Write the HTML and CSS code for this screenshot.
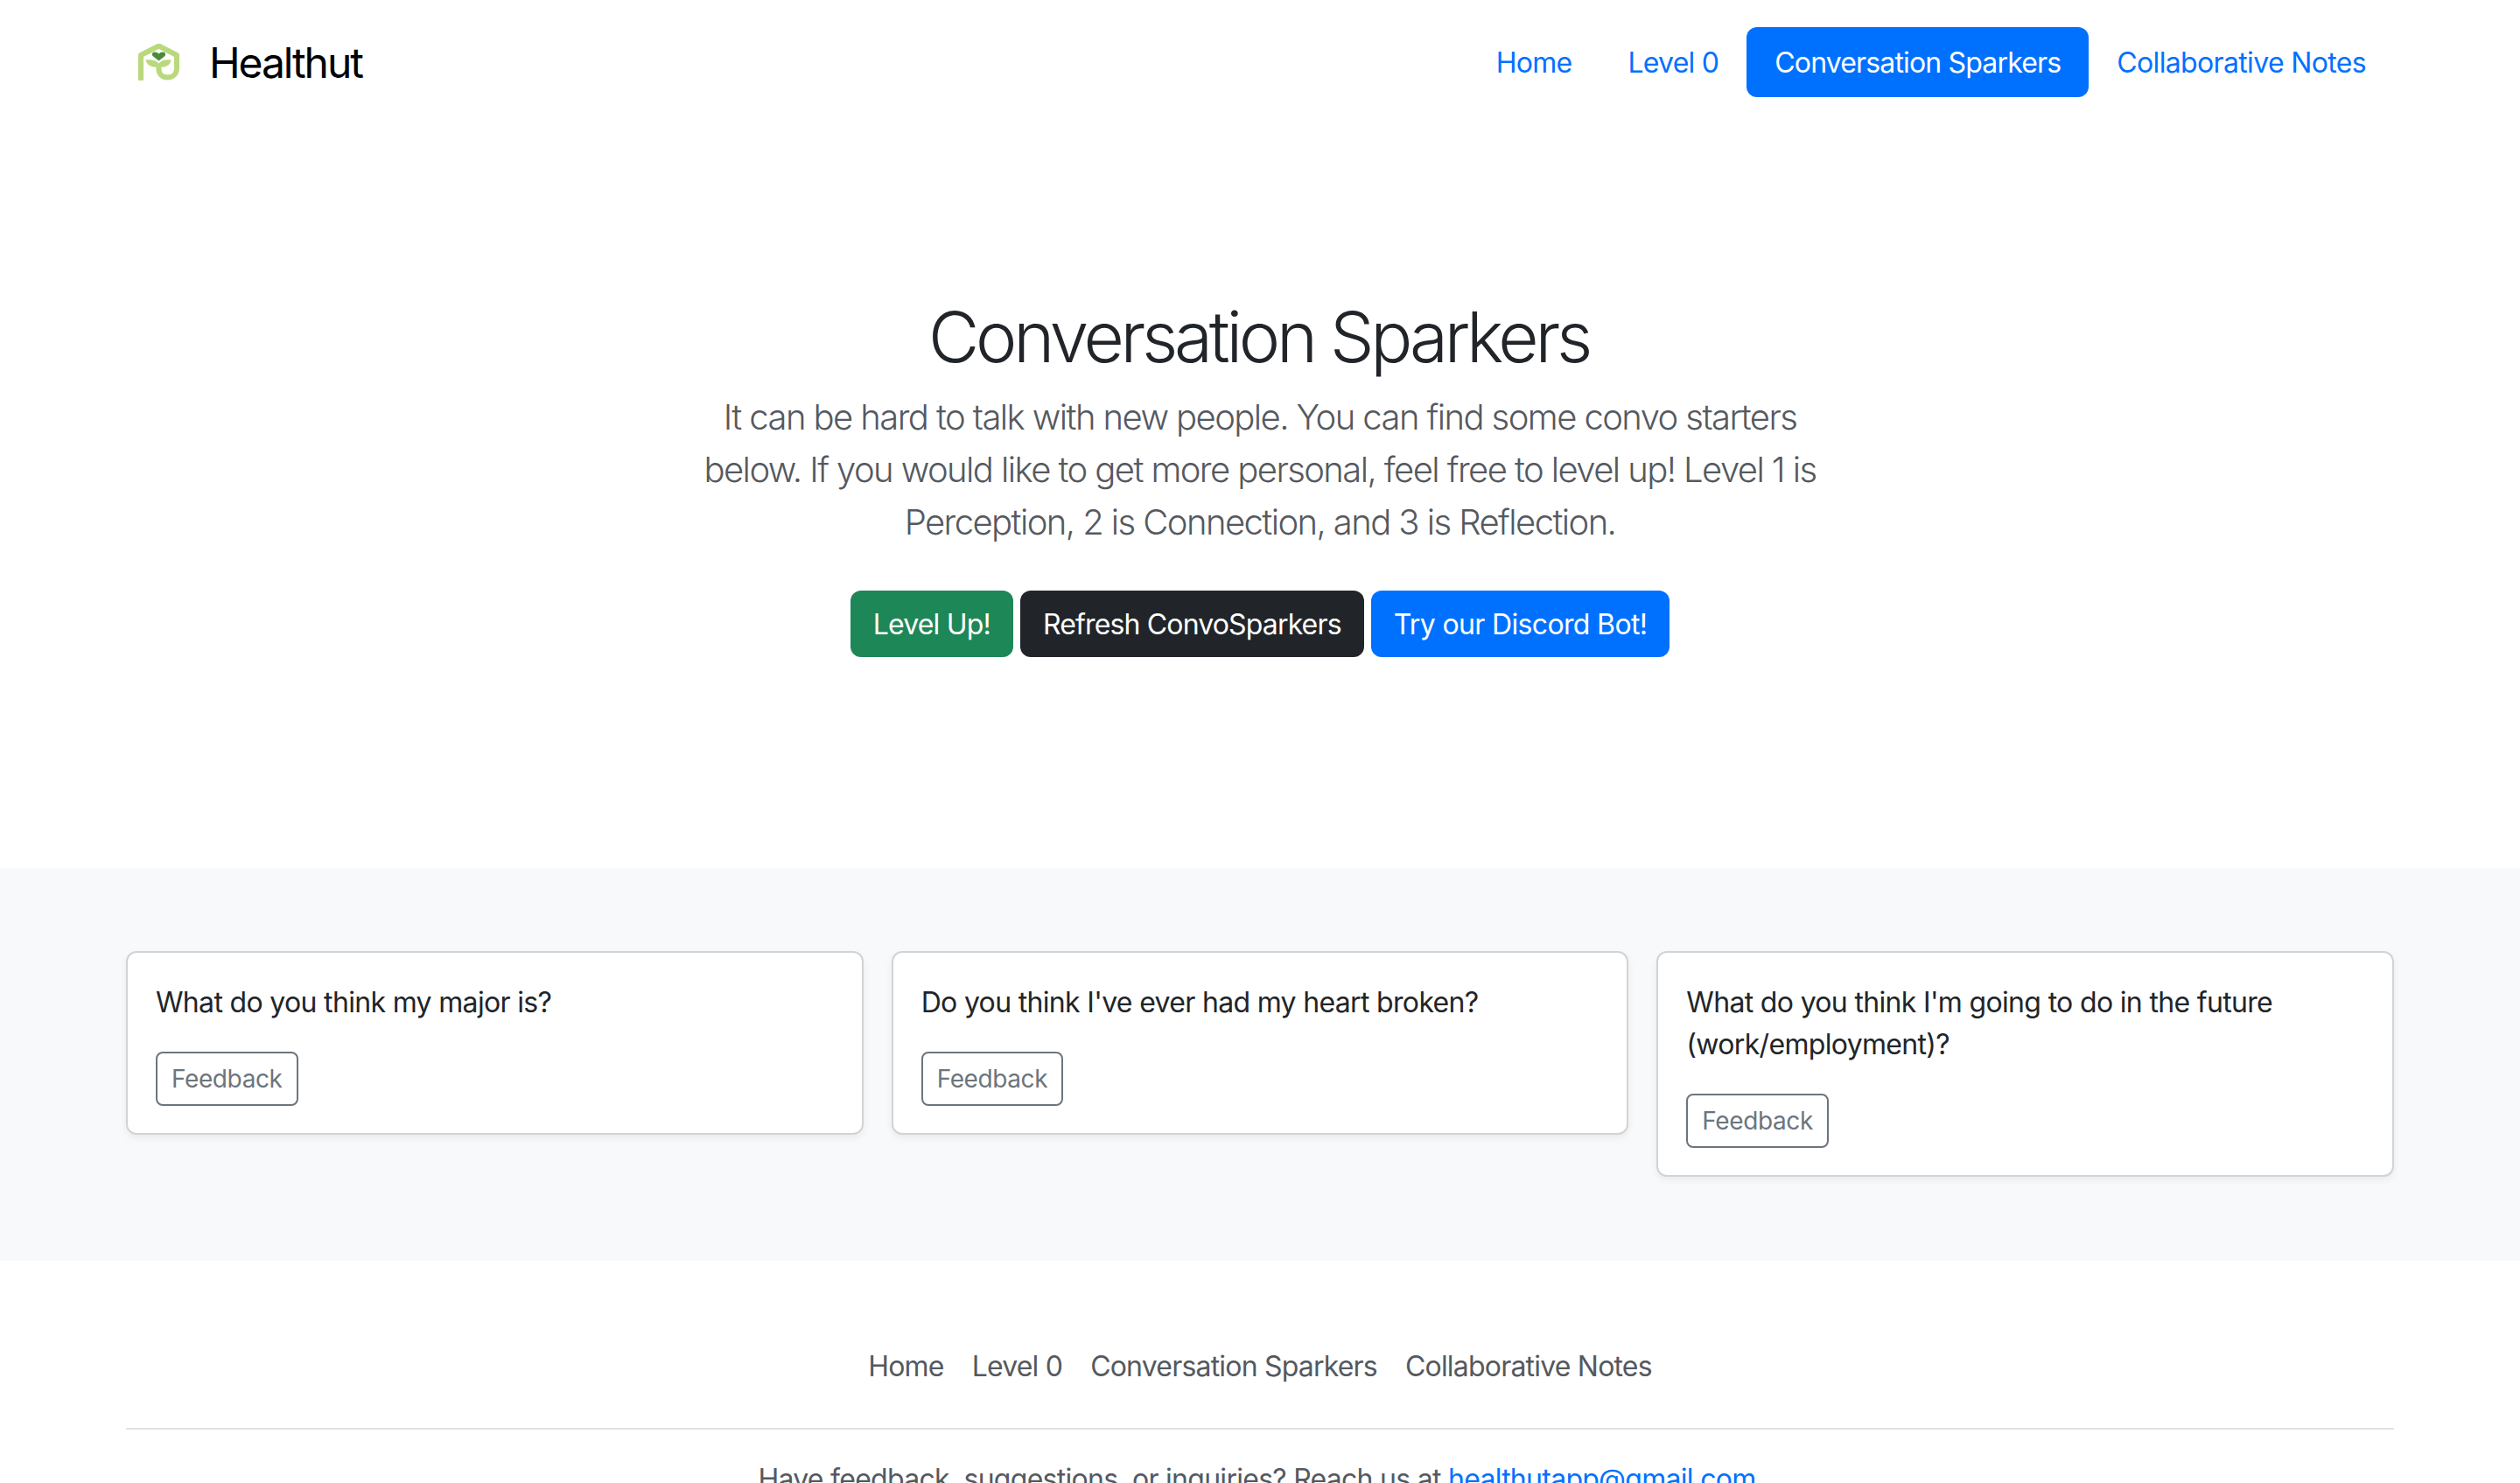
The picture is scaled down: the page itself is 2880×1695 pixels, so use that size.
FILE: index.html
```html
<!DOCTYPE html>
<html lang="en">
<head>
<meta charset="utf-8">
<title>Healthut</title>
<link rel="stylesheet" href="styles.css">
</head>
<body>
<header class="wrap topbar">
  <a class="brand" href="#">
    <svg class="logo" viewBox="0 0 47 42" aria-hidden="true">
      <path class="logo-house" d="M3 42V13L23.500 2.500L44 13V28C44 34.500 39.500 38.500 33.500 38.500C27.500 38.500 23.500 34.500 23.500 29V24" />
      <path class="logo-leaf" d="M8.500 18.500C14 17.500 21 19 23.500 22.500C26 19 32 17.500 37.500 18.500C37 24 32 27.500 25 26.500H22C15 27.500 9.500 24 8.500 18.500Z"/>
      <path class="logo-heart" d="M23.500 19.500L16.500 14C15 11.500 16.500 9.500 19 9.500C21 9.500 22.500 10.300 23.500 11.500C24.500 10.300 26 9.500 28 9.500C30.500 9.500 32 11.500 30.500 14Z"/>
    </svg>
    <span class="brand-name">Healthut</span>
  </a>
  <nav class="nav">
    <a class="nav-link" href="#">Home</a>
    <a class="nav-link" href="#">Level 0</a>
    <a class="nav-link active" href="#">Conversation Sparkers</a>
    <a class="nav-link notes" href="#">Collaborative Notes</a>
  </nav>
</header>

<main>
  <section class="hero">
    <h1>Conversation Sparkers</h1>
    <p class="lead">It can be hard to talk with new people. You can find some convo starters below. If you would like to get more personal, feel free to level up! Level 1 is Perception, 2 is Connection, and 3 is Reflection.</p>
    <div class="actions">
      <a class="btn btn-green" href="#">Level Up!</a>
      <a class="btn btn-dark" href="#">Refresh ConvoSparkers</a>
      <a class="btn btn-blue" href="#">Try our Discord Bot!</a>
    </div>
  </section>

  <section class="album">
    <div class="wrap cards">
      <article class="card">
        <p>What do you think my major is?</p>
        <a class="feedback" href="#">Feedback</a>
      </article>
      <article class="card">
        <p>Do you think I've ever had my heart broken?</p>
        <a class="feedback" href="#">Feedback</a>
      </article>
      <article class="card">
        <p>What do you think I'm going to do in the future (work/employment)?</p>
        <a class="feedback" href="#">Feedback</a>
      </article>
    </div>
  </section>
</main>

<footer class="wrap footer">
  <nav class="footer-nav">
    <a href="#">Home</a>
    <a href="#">Level 0</a>
    <a href="#">Conversation Sparkers</a>
    <a href="#">Collaborative Notes</a>
  </nav>
  <p class="contact">Have feedback, suggestions, or inquiries? Reach us at <a href="#">healthutapp@gmail.com</a></p>
</footer>
</body>
</html>
```

FILE: styles.css
```css
* { box-sizing: border-box; }
html { overflow: hidden; }
body {
  margin: 0;
  background: #fff;
  color: #212529;
  font-family: Inter, "Liberation Sans", sans-serif;
  font-size: 32px;
  line-height: 48px;
  letter-spacing: -0.85px;
}
a { text-decoration: none; }
.wrap { width: 2592px; margin: 0 auto; }

.topbar {
  display: flex;
  align-items: center;
  justify-content: space-between;
  padding: 31px 0 32px;
}
.brand {
  display: flex;
  align-items: center;
  gap: 34px;
  padding-left: 14px;
  color: #000;
  font-size: 48px;
  letter-spacing: -2.1px;
}
.brand-name { padding-top: 2px; }
.logo { width: 47px; height: 42px; }
.logo-house { fill: none; stroke: #b9d97c; stroke-width: 6; stroke-linejoin: round; }
.logo-leaf { fill: #b9d97c; }
.logo-heart { fill: #4b8a36; }

.nav { display: flex; }
.nav-link {
  padding: 17px 32px 15px;
  border-radius: 12px;
  color: #0071ff;
  letter-spacing: -0.75px;
}
.nav-link.active { background: #0071ff; color: #fff; letter-spacing: -0.84px; }
.nav-link.notes { letter-spacing: -0.65px; }

.hero {
  padding: 194px 0 241px;
  text-align: center;
}
.hero h1 {
  margin: 0 0 14px;
  padding-right: 3px;
  font-size: 80px;
  font-weight: 300;
  line-height: 96px;
  letter-spacing: -4.25px;
}
.lead {
  width: 1296px;
  margin: 0 auto 48px;
  font-size: 40px;
  font-weight: 300;
  line-height: 60px;
  letter-spacing: -1.58px;
  color: #55595f;
}
.actions { display: flex; justify-content: center; gap: 8px; }
.btn {
  padding: 15px 26px 13px;
  border-radius: 12px;
  color: #fff;
}
.btn-green { background: #1e8757; letter-spacing: -0.8px; }
.btn-dark { background: #212529; }
.btn-blue { background: #0071ff; letter-spacing: -0.65px; }

.album { background: #f8f9fa; padding: 95px 0 96px; }
.cards { display: grid; grid-template-columns: repeat(3, 1fr); gap: 32px; align-items: start; }
.card {
  padding: 33px 32px 31px;
  background: #fff;
  border: 2px solid #d2d3d4;
  border-radius: 12px;
  box-shadow: 0 4px 8px rgba(0,0,0,.06);
}
.card p { margin: 0 0 32px; letter-spacing: -0.67px; }
.feedback {
  display: inline-block;
  padding: 0 16px;
  border: 2px solid #6c757d;
  border-radius: 8px;
  color: #6c757d;
  font-size: 28px;
  letter-spacing: -0.4px;
  line-height: 58px;
}

.footer { padding-top: 97px; }
.footer-nav {
  display: flex;
  justify-content: center;
  gap: 32px;
  padding-bottom: 46px;
  border-bottom: 2px solid #dee2e6;
  margin-bottom: 33px;
}
.footer-nav a { color: #55595f; letter-spacing: -0.8px; }
.contact { margin: 0; padding-right: 7px; text-align: center; color: #55595f; letter-spacing: -0.73px; }
.contact a { color: #0071ff; }
```
